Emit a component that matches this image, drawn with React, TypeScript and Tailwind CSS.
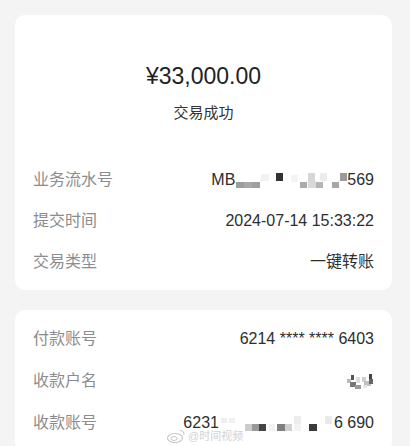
import React from 'react'

const font = { fontFamily: '"Liberation Sans", "Noto Sans CJK SC", sans-serif' }

type Block = [number, number, number, number, string]

const Mosaic = ({ w, h, blocks }: { w: number; h: number; blocks: Block[] }) => (
    <svg width={w} height={h} viewBox={`0 0 ${w} ${h}`} className='block shrink-0'>
        {blocks.map(([x, y, bw, bh, c], i) => (
            <rect key={i} x={x} y={y} width={bw} height={bh} fill={c} />
        ))}
    </svg>
)

const serialBlocks: Block[] = [
    [1, 10, 8, 6, '#9c9c9c'],
    [9, 10, 8, 6, '#a8a8a8'],
    [17, 10, 8, 6, '#9f9f9f'],
    [26, 2, 8, 7, '#f2f2f2'],
    [41, 1, 7, 8, '#333333'],
    [56, 3, 7, 7, '#f4f4f4'],
    [65, 10, 7, 6, '#aaaaaa'],
    [73, 1, 7, 8, '#d6d6d6'],
    [73, 9, 8, 7, '#d9d9d9'],
    [81, 10, 7, 6, '#b6b6b6'],
    [85, 1, 7, 8, '#ececec'],
    [97, 10, 7, 6, '#a6a6a6'],
    [105, 1, 7, 8, '#9a9a9a'],
]

const accountBlocks: Block[] = [
    [2, 3, 6, 5, '#eeeeee'],
    [10, 3, 6, 5, '#f0f0f0'],
    [26, 9, 7, 7, '#cccccc'],
    [33, 9, 7, 7, '#9a9a9a'],
    [40, 9, 7, 7, '#444444'],
    [50, 9, 6, 7, '#f2f2f2'],
    [58, 9, 8, 7, '#808080'],
    [66, 9, 7, 7, '#d0d0d0'],
    [75, 1, 7, 8, '#ececec'],
    [75, 9, 7, 7, '#f3f3f3'],
    [90, 9, 8, 7, '#3a3a3a'],
    [106, 1, 7, 8, '#eaeaea'],
]

const nameBlocks: Block[] = [
    [4, 6, 4, 4, '#bbbbbb'],
    [8, 2, 3, 5, '#555555'],
    [7, 9, 6, 5, '#777777'],
    [13, 4, 4, 6, '#dddddd'],
    [12, 12, 6, 4, '#999999'],
    [19, 4, 4, 5, '#cfcfcf'],
    [21, 8, 7, 5, '#c0c0c0'],
    [26, 1, 3, 5, '#444444'],
    [26, 6, 4, 5, '#666666'],
    [20, 12, 4, 3, '#e6e6e6'],
]

const Row = ({ label, children, tall }: { label: string; children: React.ReactNode; tall?: boolean }) => (
    <div className={`flex items-center justify-between ${tall ? 'h-[42px]' : 'h-[41px]'}`}>
        <span className='text-[16px] text-[#8c8c8c]'>{label}</span>
        <div className='flex items-center text-[16px] text-[#2e2e2e]'>{children}</div>
    </div>
)

const App = () => {
    return (
        <div style={font} className='relative h-[446px] w-[410px] overflow-hidden bg-[#f4f4f4] pt-[15px]'>
            <div className='ml-[15px] w-[377px] rounded-[10px] bg-white px-[18px] pb-[8px] pt-[46px]'>
                <div className='text-center text-[23px] leading-[30px] text-[#222]'>¥33,000.00</div>
                <div className='mt-[12px] text-center text-[15px] leading-[20px] text-[#333]'>交易成功</div>
                <div className='mt-[36px]'>
                    <Row label='业务流水号'>
                        <span>MB</span>
                        <Mosaic w={112} h={16} blocks={serialBlocks} />
                        <span>569</span>
                    </Row>
                    <Row label='提交时间'>
                        <span>2024-07-14 15:33:22</span>
                    </Row>
                    <Row label='交易类型'>
                        <span>一键转账</span>
                    </Row>
                </div>
            </div>

            <div className='ml-[15px] mt-[20px] w-[377px] rounded-[10px] bg-white px-[18px] pb-[8px] pt-[8px]'>
                <Row label='付款账号' tall>
                    <span>6214 **** **** 6403</span>
                </Row>
                <Row label='收款户名' tall>
                    <Mosaic w={31} h={16} blocks={nameBlocks} />
                </Row>
                <Row label='收款账号' tall>
                    <span>6231</span>
                    <Mosaic w={115} h={17} blocks={accountBlocks} />
                    <span>6 690</span>
                </Row>
            </div>

            {/* watermark */}
            <div className='absolute left-[166px] top-[429px] flex items-center gap-[2px] text-[11px] leading-[14px] text-[#d2d2d2]'>
                <svg width='20' height='14' viewBox='0 0 20 14'>
                    <ellipse cx='9' cy='9' rx='7.5' ry='4.5' fill='none' stroke='#c8c8c8' strokeWidth='1.2' />
                    <ellipse cx='8' cy='9.5' rx='3' ry='2' fill='none' stroke='#c8c8c8' strokeWidth='1' />
                    <path d='M14 1.5 a4 4 0 0 1 4 4' fill='none' stroke='#c8c8c8' strokeWidth='1.2' />
                </svg>
                <span>@时间视频</span>
            </div>
        </div>
    )
}

export default App
